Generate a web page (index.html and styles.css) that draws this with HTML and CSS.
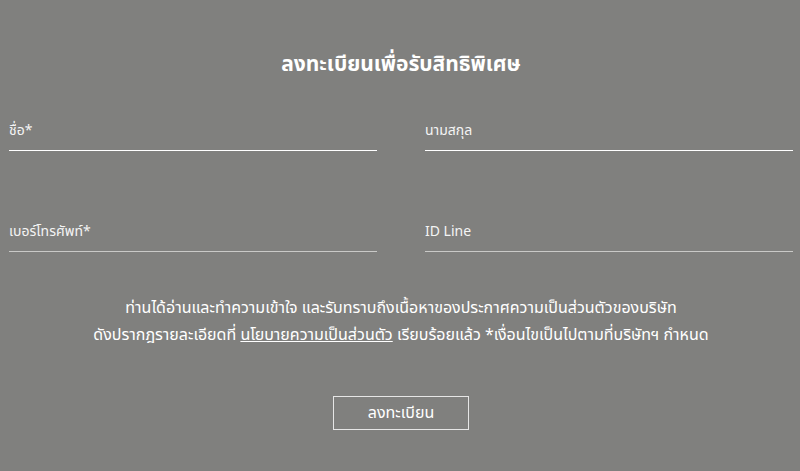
FILE: index.html
```html
<!DOCTYPE html>
<html>
<head>
<meta http-equiv="Content-Type" content="text/html; charset=utf-8">
<title>ลงทะเบียน</title>
<link rel="stylesheet" href="styles.css">
</head>
<body>
<div id="register">
  <h2 class="title">ลงทะเบียนเพื่อรับสิทธิพิเศษ</h2>
  <form class="fields">
    <div class="field"><label>ชื่อ*</label></div>
    <div class="field"><label>นามสกุล</label></div>
    <div class="field dim"><label>เบอร์โทรศัพท์*</label></div>
    <div class="field dim"><label>ID Line</label></div>
  </form>
  <p class="consent">
    ท่านได้อ่านและทำความเข้าใจ และรับทราบถึงเนื้อหาของประกาศความเป็นส่วนตัวของบริษัท<br>
    ดังปรากฎรายละเอียดที่ <a href="#">นโยบายความเป็นส่วนตัว</a> เรียบร้อยแล้ว *เงื่อนไขเป็นไปตามที่บริษัทฯ กำหนด
  </p>
  <div class="actions"><button type="button" class="submit">ลงทะเบียน</button></div>
</div>
</body>
</html>
```

FILE: styles.css
```css
html, body { margin: 0; padding: 0; }
body {
  background-color: #80807e;
  color: #ffffff;
  font-family: "Noto Sans Thai", "Noto Sans", "Liberation Sans", sans-serif;
}
#register { padding: 50px 7px 0 9px; }
.title {
  margin: 0;
  text-align: center;
  font-size: 21px;
  font-weight: bold;
  line-height: 30px;
}
.fields {
  display: grid;
  grid-template-columns: 368px 368px;
  column-gap: 48px;
  row-gap: 68px;
  margin-top: 38px;
}
.field {
  height: 32px;
  border-bottom: 1px solid #ffffff;
  font-size: 14px;
}
.field.dim { border-bottom: 1px solid #c9c9c7; }
.field label { display: block; line-height: 26px; color: #f4f4f4; }
.consent {
  margin: 43px 0 0 0;
  text-align: center;
  font-size: 16px;
  line-height: 27px;
}
.consent a { color: #ffffff; }
.actions { text-align: center; margin-top: 47px; }
.submit {
  width: 136px;
  height: 34px;
  background: transparent;
  border: 1px solid #e6e6e6;
  color: #ffffff;
  font-family: inherit;
  font-size: 16px;
  cursor: pointer;
}
```
